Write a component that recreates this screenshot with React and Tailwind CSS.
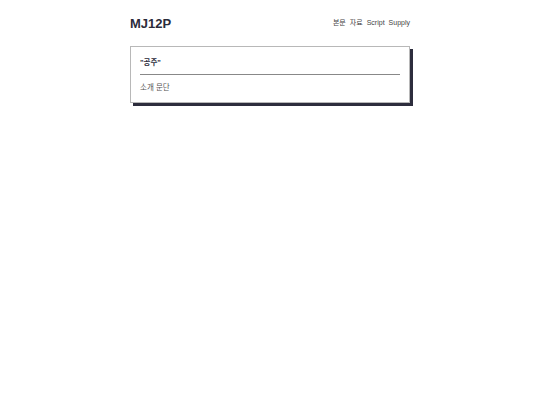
import React from "react";

const App = () => {
    const links = ["본문", "자료", "Script", "Supply"];

    return (
        <div
            className="min-h-screen bg-white text-[#2b2b3a]"
            style={{ fontFamily: '"Liberation Sans", Arial, "Noto Sans CJK KR", sans-serif' }}
        >
            <div className="w-[280px] mx-auto pt-[13px]">
                {/* Header */}
                <header className="flex items-center justify-between h-[20px]">
                    <h1 className="font-bold text-[13px] leading-none">MJ12P</h1>
                    <nav className="flex gap-[4px] text-[7px] text-[#444]">
                        {links.map((l) => (
                            <span key={l} className="cursor-pointer text-[#444]">
                                {l}
                            </span>
                        ))}
                    </nav>
                </header>

                {/* Card */}
                <div className="mt-[13px] border border-[#b8b8b8] bg-white px-[9px] pt-[11px] pb-[9px] shadow-[3px_3px_0_#2d2d3d]">
                    <h2 className="font-bold text-[7.5px] leading-[10px]">"공주"</h2>
                    <hr className="mt-[6px] border-t border-[#888]" />
                    <p className="mt-[8px] text-[7.5px] leading-[10px] text-[#555]">소개 문단</p>
                </div>
            </div>
        </div>
    );
};

export default App;
